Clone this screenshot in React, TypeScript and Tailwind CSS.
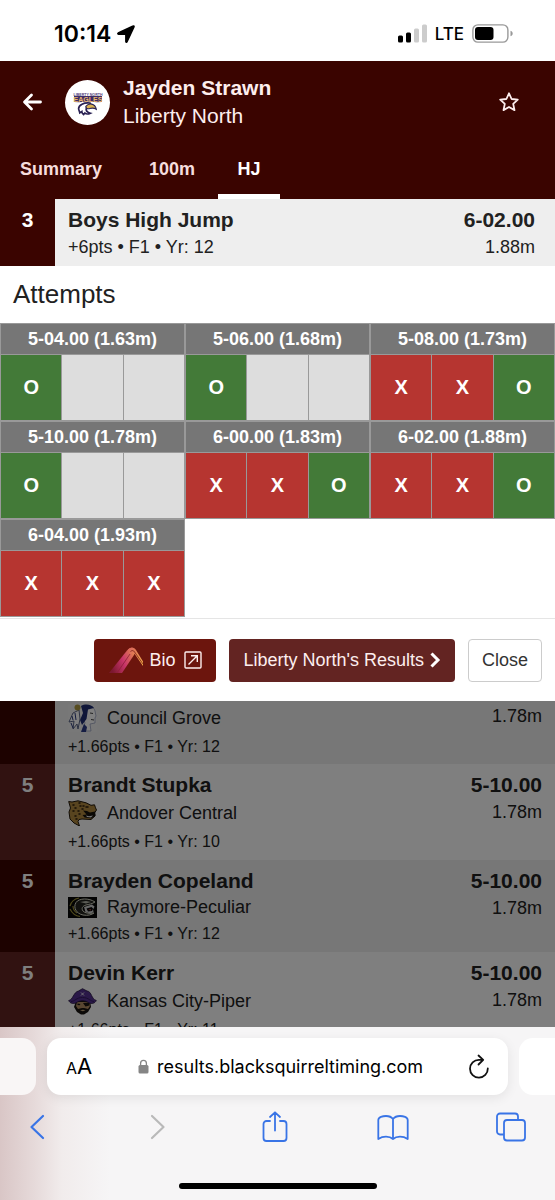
import React from "react";

type Mark = "X" | "O" | "";

const heights: { label: string; marks: Mark[] }[] = [
  { label: "5-04.00 (1.63m)", marks: ["O", "", ""] },
  { label: "5-06.00 (1.68m)", marks: ["O", "", ""] },
  { label: "5-08.00 (1.73m)", marks: ["X", "X", "O"] },
  { label: "5-10.00 (1.78m)", marks: ["O", "", ""] },
  { label: "6-00.00 (1.83m)", marks: ["X", "X", "O"] },
  { label: "6-02.00 (1.88m)", marks: ["X", "X", "O"] },
  { label: "6-04.00 (1.93m)", marks: ["X", "X", "X"] },
];

const markColor: Record<string, string> = {
  X: "bg-[#b63530]",
  O: "bg-[#437a38]",
  "": "bg-[#dddddd]",
};

function StatusBar() {
  return (
    <div className="flex h-[61px] shrink-0 items-center justify-between bg-white pt-1.5 pr-[42px] pl-[54px] font-['Inter',sans-serif] text-black">
      <div className="flex items-center gap-1.5">
        <span className="text-[23px] leading-6 font-semibold">10:14</span>
        <svg viewBox="0 0 18 18" className="size-[18px]" fill="#000" stroke="#000" strokeWidth="1.400" strokeLinejoin="round">
          <path d="M16.200 1 1.200 8c-.7.400-.6 1.200.2 1.200h7c.3 0 .4.100.4.400v6.900c0 .8.900 1 1.300.2L17 1.900c.3-.7-.2-1.200-.8-.9Z" />
        </svg>
      </div>
      <div className="flex items-center gap-2">
        <svg viewBox="0 0 29 19" className="h-[19px] w-[29px]">
          <rect x="0" y="11.500" width="5" height="7" rx="1.500" fill="#000" />
          <rect x="8" y="8.500" width="5" height="10" rx="1.500" fill="#000" />
          <rect x="16" y="4.500" width="5" height="14" rx="1.500" fill="#ccc" />
          <rect x="24" y="0.500" width="5" height="18" rx="1.500" fill="#ccc" />
        </svg>
        <span className="text-[17px] leading-6 font-medium">LTE</span>
        <svg viewBox="0 0 41 19" className="h-[19px] w-[41px]">
          <rect x="0.900" y="0.900" width="35" height="17.200" rx="5" fill="none" stroke="#999" strokeWidth="1.400" />
          <rect x="3" y="3" width="18.500" height="13" rx="3" fill="#000" />
          <path d="M38.500 6.700c1.700.6 2.200 1.600 2.200 2.800s-.5 2.200-2.200 2.800Z" fill="#999" />
        </svg>
      </div>
    </div>
  );
}

function EaglesLogo() {
  return (
    <svg viewBox="0 0 45 45" className="size-[45px] rounded-full bg-white">
      <path d="M9 16h28v6l-5 .3-9-.8-9 .8-5-.3Z" fill="#3d2d66" />
      <text x="23" y="15.500" textAnchor="middle" className="font-['Liberation_Sans',sans-serif] text-[3.600px] font-bold" fill="#54437c">LIBERTY NORTH</text>
      <text x="23" y="21.800" textAnchor="middle" className="font-['Liberation_Sans',sans-serif] text-[7px] font-bold" fill="#e9b56a">EAGLES</text>
      <path d="M25 23c-6-.8-11.500 2-11.400 5.800.1 1.500 1 2.600 1.200 4l2-1.200c0 1.400.8 2.200 1.800 2.900l1.300-1.500c1 1 3.300 1.200 5.500.2-3-.9-4.800-2.600-4.100-5l5.100-2.600Z" fill="#fff" stroke="#292153" strokeWidth="1.700" />
      <path d="M20.800 26.300c3-3.600 9.200-3.200 10.500 2.900-2-1.300-4.400-1.400-6.800-.6-2 .6-3.700-.2-3.700-2.300Z" fill="#d7b04f" stroke="#292153" strokeWidth="1.100" />
    </svg>
  );
}

function Header() {
  return (
    <header className="shrink-0 bg-[#3a0400] text-white">
      <div className="flex items-center px-5 pt-[13px]">
        <button type="button" aria-label="Back" className="mr-5 flex h-14 w-[25px] items-center">
          <svg viewBox="0 0 22 20" className="ml-0.5 h-5 w-[22px]" fill="none" stroke="#fff" strokeWidth="2.800" strokeLinecap="round" strokeLinejoin="round">
            <path d="M9.500 3 2.500 10l7 7M3 10h15.500" />
          </svg>
        </button>
        <EaglesLogo />
        <div className="ml-[13px] flex-1">
          <h1 className="text-[21px] leading-7 font-bold text-[#fdeeee]">Jayden Strawn</h1>
          <p className="text-[21px] leading-7 text-[#fdeeee]">Liberty North</p>
        </div>
        <button type="button" aria-label="Favorite" className="mr-4">
          <svg viewBox="0 0 20 20" className="size-5" fill="none" stroke="#fdeeee" strokeWidth="1.800" strokeLinejoin="round">
            <path d="m10 1.300 2.600 5.700 6.200.7-4.600 4.200 1.300 6.200L10 15l-5.500 3.100 1.300-6.200L1.200 7.700l6.200-.7Z" />
          </svg>
        </button>
      </div>
      <nav className="flex pl-5 text-lg leading-6 font-bold">
        <a href="#summary" className="flex h-[69px] items-center pt-2 pr-6 text-[#f6dddd]">
          Summary
        </a>
        <a href="#100m" className="flex h-[69px] items-center px-[23px] pt-2 text-[#f6dddd]">
          100m
        </a>
        <a href="#hj" className="flex h-[69px] w-[62px] items-center justify-center border-b-[5px] border-white pt-[14px] text-white">
          HJ
        </a>
      </nav>
    </header>
  );
}

function EventRow() {
  return (
    <section className="flex shrink-0 bg-[#eeeeee] text-[#212121]">
      <div className="w-[55px] shrink-0 bg-[#3a0400] pt-2 text-center text-[21px] leading-[26px] font-bold text-white">3</div>
      <div className="flex-1 pt-2 pb-[5px] pl-[13px]">
        <h2 className="text-[21px] leading-[26px] font-bold">Boys High Jump</h2>
        <p className="text-lg leading-7">+6pts • F1 • Yr: 12</p>
      </div>
      <div className="pt-2 pr-5 text-right">
        <div className="text-[21px] leading-[26px] font-bold">6-02.00</div>
        <div className="text-lg leading-7">1.88m</div>
      </div>
    </section>
  );
}

function Attempts() {
  return (
    <section className="shrink-0 bg-white">
      <h2 className="px-[13px] py-3 text-[26px] leading-[33px] text-[#212121]">Attempts</h2>
      <div className="grid grid-cols-3 pb-px">
        {heights.map((h) => (
          <table key={h.label} className="w-full table-fixed border-separate border-spacing-px bg-[#999999] text-white">
            <thead>
              <tr>
                <th colSpan={3} className="h-[30px] bg-[#767676] p-0 text-lg leading-6 font-bold">
                  {h.label}
                </th>
              </tr>
            </thead>
            <tbody>
              <tr>
                {h.marks.map((m, i) => (
                  <td key={i} className={`h-[65px] p-0 pb-0.5 text-center text-xl leading-6 font-bold ${markColor[m]}`}>
                    {m}
                  </td>
                ))}
              </tr>
            </tbody>
          </table>
        ))}
      </div>
    </section>
  );
}

function ModalFooter() {
  return (
    <footer className="flex shrink-0 justify-end gap-[13px] border-t border-[#e5e5e5] bg-white px-[13px] pt-5 pb-[19px] text-lg leading-6">
      <a href="#bio" className="flex h-[43px] items-center rounded bg-[#6c150d] px-[14px] pb-px text-[#fdeeee]">
        <svg viewBox="0 0 36 28" className="mr-[5px] h-7 w-9">
          <defs>
            <linearGradient id="bio-left" x1="0" y1="0.600" x2="1" y2="0.200">
              <stop offset="0" stopColor="#7c1830" />
              <stop offset="0.500" stopColor="#c9356a" />
              <stop offset="1" stopColor="#e58a4c" />
            </linearGradient>
            <linearGradient id="bio-right" x1="0" y1="0" x2="1" y2="1">
              <stop offset="0" stopColor="#d8605c" />
              <stop offset="1" stopColor="#f5b04a" />
            </linearGradient>
          </defs>
          <path d="M1 27 19 4.500c3-3.600 6.500-3.600 8.500-.5l-1.500 5L14 27H1Z" fill="url(#bio-left)" />
          <path d="M20 3.500c2.800-3 6-2.700 8 .5l7 11.500V20L27 8.500c-1.500-2-3-2-4.500-.5Z" fill="url(#bio-right)" />
          <path d="M22.500 5.500c1.500-1.400 3-1.200 4 .4L35 18" fill="none" stroke="#6c150d" strokeWidth="0.700" />
          <path d="M9 27 22 8" fill="none" stroke="#8e2038" strokeWidth="0.800" />
        </svg>
        Bio
        <svg viewBox="0 0 18 18" className="ml-[9px] size-[18px]" fill="none" stroke="#fdeeee" strokeWidth="1.400">
          <rect x="1" y="1" width="16" height="16" rx="1" />
          <path d="M4.500 13.500 13 5M7 4.700h6.300V11" />
        </svg>
      </a>
      <button type="button" className="flex h-[43px] items-center gap-1.5 rounded bg-[#632422] px-[14px] pb-px text-[#fdeeee]">
        Liberty North's Results
        <svg viewBox="0 0 11 16" className="h-4 w-[11px]" fill="none" stroke="#fff" strokeWidth="3">
          <path d="m1.500 1.500 6.500 6.500-6.500 6.500" />
        </svg>
      </button>
      <button type="button" className="h-[43px] rounded border border-[#cccccc] bg-white px-[13px] pb-px text-[#333333]">
        Close
      </button>
    </footer>
  );
}

const CouncilLogo = (
  <svg viewBox="0 0 29 28" className="h-7 w-[29px]">
    <path d="M0 0h29v28H0Z" fill="#f1f1f1" />
    <path d="M17 3c5-2 9 0 10 4l1 5-1 2v5l-5 1 1 7H14l3-8-2-6Z" fill="#fff" stroke="#8b94b5" strokeWidth="0.700" />
    <path d="M13 2c5-3 11-1 13 2l-6 1.500-1.500 9.500-4.500 6-2-5 3-7Z" fill="#1e2c72" />
    <path d="m16 20 3 3-1 5h-5Z" fill="#2b3b86" />
    <path d="M11 6 5 9l-4 9 5-1-1 8 4-5 1 5 2-10Z" fill="#fff" stroke="#4b567c" strokeWidth="0.900" />
    <path d="m4 12 1 4m2-7 1 7m-5 3 2 5" stroke="#2a397d" strokeWidth="1" />
    <circle cx="9.500" cy="3.500" r="3" fill="#ae9b42" />
    <path d="m22 9 3 .5m-2 6 3 .5" stroke="#444" />
  </svg>
);

const JaguarLogo = (
  <svg viewBox="0 0 29 26" className="h-[26px] w-[29px]">
    <path d="M.7 1.500 4 2 10 .8l8 2 5 2.500 3.500-.5 1 3 1 2.200-2 3 .5 3-4 3.500-9-.5-3 .5-1 2 1.500 4.500L6 23 2 19 1 12 2.500 8Z" fill="#b1893f" stroke="#20170b" strokeWidth="1" strokeLinejoin="round" />
    <path d="m15 10.500 4 .5 3 1.500 5-1 .5 4-4 3-7-1-2-2.500 4-.5Z" fill="#15110b" />
    <path d="m18 15.500 3 .8 4-.8-2 2-4-.5Z" fill="#eee" />
    <path d="M5 5h1m5-2h1M7 8h1m4-2h1m2 0h1m-11 5h1m4 0h1m3-2h1m-8 7h1m3-2h1m-4 5h1m9-12h2" stroke="#2b1d0a" strokeWidth="1.500" strokeLinecap="round" />
  </svg>
);

const PantherLogo = (
  <svg viewBox="0 0 29 21" className="h-[21px] w-[29px]">
    <path d="M0 0h29v21H0Z" fill="#070707" />
    <path d="M27 5C21 .8 11 1 8 5.500c-3 5 0 11 7 12.500 5 1 9-.5 11-2-5 .8-9 .2-11-2-2-2.500-.5-5 3-6 3-.7 6-1 9-3Z" fill="#22231f" stroke="#d8d9c6" strokeWidth="1" />
    <path d="M2 9c1-4 4-7 9-8M2 12c2 4 5 7 10 7.500M5 9c0 3 1 5 4 7" stroke="#9d9138" strokeWidth="1.200" fill="none" />
    <path d="m16 10 8-2.500 2.500 2-1 2.500-2-2-5 1.500 1.500 3 4-.5 1-2 .5 3-3 1.500-5-1.500Z" fill="#cfcfcf" />
    <path d="m12 5 6-1 5 1-5 1.500Z" fill="#b9bbae" />
    <path d="m20 12.500 3-.5v1.500Z" fill="#a03c3c" />
  </svg>
);

const PirateLogo = (
  <svg viewBox="0 0 29 27" className="h-[27px] w-[29px]">
    <path d="m8 13 7-3 7 3 1 6-3 5-4 2.500h-3L9 24l-3-5Z" fill="#17120f" />
    <path d="m9 14 12 0 1 4-2 3-4-1-2 0-4 1-2-3Z" fill="#b08c62" />
    <path d="m15 15 6-.5.500 3-4 1ZM9.500 15.500l3 .5-1 1.300-2-.3Z" fill="#17120f" />
    <path d="M12 22.300c2-.8 4-.8 5.500 0l-2.700 1Z" fill="#c3a77c" />
    <path d="M.7 12.500C5 12 5.500 4 10.500 3L14.500.7 19 3c5 .5 4 8 9.300 9.500-1.500 3-4.300 3.500-7.300 2.500-4-3-9-3-13 0-3 1-6 .5-7.300-2.500Z" fill="#543090" stroke="#1f1038" strokeWidth="0.800" />
    <path d="M3 13.500c4 0 5-4 11.500-4s8 4 11.500 4" fill="none" stroke="#341c60" strokeWidth="1" />
    <path d="m13 4.500 3 3m0-3-3 3" stroke="#eee" strokeWidth="0.900" />
  </svg>
);

const results = [
  { name: "Brandt Stupka", school: "Andover Central", info: "+1.66pts • F1 • Yr: 10", logo: JaguarLogo, odd: true, line: "h-[30px]" },
  { name: "Brayden Copeland", school: "Raymore-Peculiar", info: "+1.66pts • F1 • Yr: 12", logo: PantherLogo, odd: false, line: "h-[26px]" },
  { name: "Devin Kerr", school: "Kansas City-Piper", info: "+1.66pts • F1 • Yr: 11", logo: PirateLogo, odd: true, line: "h-[30px]" },
];

function ResultList() {
  return (
    <section className="relative min-h-0 flex-1 overflow-hidden text-[#212121]">
      <div className="flex bg-[#eeeeee]">
        <div className="w-[55px] shrink-0 bg-[#3a0400]" />
        <div className="flex-1 pt-0.5 pb-[3px] pl-[13px]">
          <div className="flex h-[30px] items-center gap-2.5 text-lg leading-6">
            {CouncilLogo}
            Council Grove
          </div>
          <p className="text-base leading-7">+1.66pts • F1 • Yr: 12</p>
        </div>
        <div className="pt-[3px] pr-[13px] text-lg leading-6">1.78m</div>
      </div>
      {results.map((r) => (
        <div key={r.name} className={`flex ${r.odd ? "bg-white" : "bg-[#eeeeee]"}`}>
          <div className={`w-[55px] shrink-0 pt-2 text-center text-[21px] leading-[26px] font-bold text-white ${r.odd ? "bg-[#632422]" : "bg-[#3a0400]"}`}>5</div>
          <div className="flex-1 pt-2 pb-1 pl-[13px]">
            <h3 className="text-[21px] leading-[26px] font-bold">{r.name}</h3>
            <div className={`flex items-center gap-2.5 text-lg leading-6 ${r.line}`}>
              {r.logo}
              {r.school}
            </div>
            <p className="text-base leading-7">{r.info}</p>
          </div>
          <div className="pt-2 pr-[13px] text-right">
            <div className="text-[21px] leading-[26px] font-bold">5-10.00</div>
            <div className="text-lg leading-7">1.78m</div>
          </div>
        </div>
      ))}
      <div className="absolute inset-0 bg-black/50" />
    </section>
  );
}

function BrowserBar() {
  return (
    <div className="flex h-[173px] shrink-0 flex-col bg-[#f6f5f6] bg-[linear-gradient(90deg,#d9c6c6_0px,#e6dada_35px,#f1ecec_62px,transparent_110px)] font-['Inter',sans-serif] text-black">
      <div className="flex gap-[11px] pt-[11px]">
        <div className="w-9 rounded-r-[14px] bg-[#f9f6f6]" />
        <div className="flex h-[57px] flex-1 items-center rounded-[14px] bg-white px-[19px] shadow-[0_3px_12px_rgba(0,0,0,0.08)]">
          <button type="button" aria-label="Page settings" className="flex items-baseline">
            <span className="text-base leading-6">A</span>
            <span className="text-[22px] leading-6">A</span>
          </button>
          <div className="flex flex-1 items-center justify-center gap-2">
            <svg viewBox="0 0 11 15" className="h-[15px] w-[11px]">
              <rect x="0.500" y="6" width="10" height="8.500" rx="1.500" fill="#858585" />
              <path d="M2.600 7V4.200a2.900 2.900 0 0 1 5.800 0V7" fill="none" stroke="#858585" strokeWidth="1.300" />
            </svg>
            <span className="text-lg leading-6">results.blacksquirreltiming.com</span>
          </div>
          <button type="button" aria-label="Reload">
            <svg viewBox="0 0 20 25" className="h-[25px] w-5" fill="none" stroke="#111" strokeWidth="1.800" strokeLinecap="round" strokeLinejoin="round">
              <path d="M18.800 14.500A8.900 8.900 0 1 1 10 5.800h4M9.500 1.500l4.700 4.300-4.700 4.700" />
            </svg>
          </button>
        </div>
        <div className="w-9 rounded-l-[14px] bg-white" />
      </div>
      <nav className="flex items-center justify-between pt-4 pr-7 pl-[22px] text-[#3974e6]">
        <button type="button" aria-label="Previous page" className="flex w-8 justify-center">
          <svg viewBox="0 0 28 32" className="h-8 w-7" fill="none" stroke="currentColor" strokeWidth="2.200" strokeLinecap="round" strokeLinejoin="round">
            <path d="M19 5 7.500 16 19 27" />
          </svg>
        </button>
        <button type="button" aria-label="Next page" className="flex w-8 justify-center text-[#b9b9b9]">
          <svg viewBox="0 0 28 32" className="h-8 w-7" fill="none" stroke="currentColor" strokeWidth="2.200" strokeLinecap="round" strokeLinejoin="round">
            <path d="M10 5 21.500 16 10 27" />
          </svg>
        </button>
        <button type="button" aria-label="Share" className="flex w-8 justify-center">
          <svg viewBox="0 0 28 32" className="h-8 w-7" fill="none" stroke="currentColor" strokeWidth="1.800" strokeLinecap="round" strokeLinejoin="round">
            <path d="M9 10H5.500a3 3 0 0 0-3 3v14a3 3 0 0 0 3 3h17a3 3 0 0 0 3-3V13a3 3 0 0 0-3-3H19M14 19.500V1.500M9 6l5-4.700L19 6" />
          </svg>
        </button>
        <button type="button" aria-label="Bookmarks" className="flex w-8 justify-center">
          <svg viewBox="0 0 32 32" className="h-8 w-8" fill="none" stroke="currentColor" strokeWidth="1.800" strokeLinecap="round" strokeLinejoin="round">
            <path d="M16 8C14.500 6 12 5 9 5 5.800 5 1.300 6.200 1.300 9v19c2-1.300 4.500-2.300 7.700-2.300s5.500 1 7 2.300c1.500-1.300 4-2.300 7-2.300s5.700 1 7.700 2.300V9c0-2.800-4.500-4-7.700-4-3 0-5.500 1-7 3ZM16 8v20" />
          </svg>
        </button>
        <button type="button" aria-label="Tabs" className="flex w-8 justify-center">
          <svg viewBox="0 0 30 32" className="h-8 w-[30px]" fill="none" stroke="currentColor" strokeWidth="1.800" strokeLinejoin="round">
            <rect x="8" y="9" width="21" height="20.500" rx="3" />
            <path d="M8 23.500H4a3 3 0 0 1-3-3V5.500a3 3 0 0 1 3-3h15a3 3 0 0 1 3 3V9" />
          </svg>
        </button>
      </nav>
      <div className="mt-auto mb-[11px] h-1.5 w-[198px] self-center rounded-full bg-black" />
    </div>
  );
}

export default function App() {
  return (
    <div className="flex h-screen flex-col overflow-hidden bg-white font-['Liberation_Sans',Arial,sans-serif]">
      <StatusBar />
      <Header />
      <EventRow />
      <Attempts />
      <ModalFooter />
      <ResultList />
      <BrowserBar />
    </div>
  );
}
